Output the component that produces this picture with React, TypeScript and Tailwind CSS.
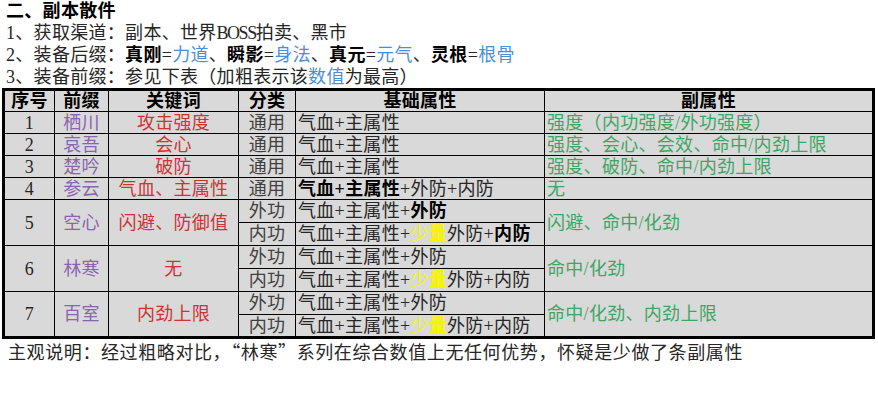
const font = "font-['Liberation_Serif','Noto_Sans_CJK_SC',serif]";

const purple = "text-[#8a64b0]";
const red = "text-[#cc3333]";
const green = "text-[#3fa564]";
const blue = "text-[#4a8fd6]";
const yellow = "text-[#f5f500]";

const cell = "border border-black px-[2px] leading-none whitespace-nowrap";
const quote = "font-['Noto_Sans_CJK_SC',sans-serif] [font-feature-settings:'fwid']";

export default function App() {
  return (
    <div lang="zh-CN" className={`w-[878px] h-[400px] bg-white text-[#262626] ${font} text-[18px] tracking-[0.3px]`}>
      <div className="pl-[6px] leading-[22px]">
        <div className="font-bold text-black">二、副本散件</div>
        <div>
          1、获取渠道：副本、世界<span className="tracking-[-1.5px]">BOSS</span>拍卖、黑市
        </div>
        <div>
          2、装备后缀：<b className="text-black">真刚</b>=<span className={blue}>力道</span>、
          <b className="text-black">瞬影</b>=<span className={blue}>身法</span>、
          <b className="text-black">真元</b>=<span className={blue}>元气</span>、
          <b className="text-black">灵根</b>=<span className={blue}>根骨</span>
        </div>
        <div>
          3、装备前缀：参见下表（加粗表示该<span className={blue}>数值</span>为最高）
        </div>
      </div>

      <table className="ml-[2px] w-[873px] table-fixed border-collapse border-[3px] border-black bg-[#d9d9d9]">
        <colgroup>
          <col className="w-[51px]" />
          <col className="w-[54px]" />
          <col className="w-[130px]" />
          <col className="w-[57px]" />
          <col className="w-[249px]" />
          <col />
        </colgroup>
        <thead>
          <tr className="h-[22px] font-bold text-black text-center">
            <th className={cell}>序号</th>
            <th className={cell}>前缀</th>
            <th className={cell}>关键词</th>
            <th className={cell}>分类</th>
            <th className={cell}>基础属性</th>
            <th className={cell}>副属性</th>
          </tr>
        </thead>
        <tbody>
          <SimpleRow n="1" prefix="栖川" key1="攻击强度" base={<>气血+主属性</>} sub="强度（内功强度/外功强度）" />
          <SimpleRow n="2" prefix="哀吾" key1="会心" base={<>气血+主属性</>} sub="强度、会心、会效、命中/内劲上限" />
          <SimpleRow n="3" prefix="楚吟" key1="破防" base={<>气血+主属性</>} sub="强度、破防、命中/内劲上限" />
          <SimpleRow
            n="4"
            prefix="参云"
            key1="气血、主属性"
            base={<><b className="text-black">气血+主属性</b>+外防+内防</>}
            sub="无"
          />
          <SplitRow
            n="5"
            prefix="空心"
            key1="闪避、防御值"
            outer={<>气血+主属性+<b className="text-black">外防</b></>}
            inner={<>气血+主属性+<span className={yellow}>少量</span>外防+<b className="text-black">内防</b></>}
            sub="闪避、命中/化劲"
          />
          <SplitRow
            n="6"
            prefix="林寒"
            key1="无"
            outer={<>气血+主属性+外防</>}
            inner={<>气血+主属性+<span className={yellow}>少量</span>外防+内防</>}
            sub="命中/化劲"
          />
          <SplitRow
            n="7"
            prefix="百室"
            key1="内劲上限"
            outer={<>气血+主属性+外防</>}
            inner={<>气血+主属性+<span className={yellow}>少量</span>外防+内防</>}
            sub="命中/化劲、内劲上限"
          />
        </tbody>
      </table>

      <div className="pl-[8px] pt-[1px] leading-[22px] tracking-[0.6px]">
        主观说明：经过粗略对比，<span className={quote}>“</span>林寒<span className={quote}>”</span>系列在综合数值上无任何优势，怀疑是少做了条副属性
      </div>
    </div>
  );
}

function SimpleRow({
  n,
  prefix,
  key1,
  base,
  sub,
}: {
  n: string;
  prefix: string;
  key1: string;
  base: React.ReactNode;
  sub: string;
}) {
  return (
    <tr className="h-[22px]">
      <td className={`${cell} text-center`}>{n}</td>
      <td className={`${cell} text-center ${purple}`}>{prefix}</td>
      <td className={`${cell} text-center ${red}`}>{key1}</td>
      <td className={`${cell} text-center text-[#404040]`}>通用</td>
      <td className={cell}>{base}</td>
      <td className={`${cell} ${green}`}>{sub}</td>
    </tr>
  );
}

function SplitRow({
  n,
  prefix,
  key1,
  outer,
  inner,
  sub,
}: {
  n: string;
  prefix: string;
  key1: string;
  outer: React.ReactNode;
  inner: React.ReactNode;
  sub: string;
}) {
  return (
    <>
      <tr className="h-[23px]">
        <td rowSpan={2} className={`${cell} text-center`}>{n}</td>
        <td rowSpan={2} className={`${cell} text-center ${purple}`}>{prefix}</td>
        <td rowSpan={2} className={`${cell} text-center ${red}`}>{key1}</td>
        <td className={`${cell} text-center text-[#404040]`}>外功</td>
        <td className={cell}>{outer}</td>
        <td rowSpan={2} className={`${cell} ${green}`}>{sub}</td>
      </tr>
      <tr className="h-[23px]">
        <td className={`${cell} text-center text-[#404040]`}>内功</td>
        <td className={cell}>{inner}</td>
      </tr>
    </>
  );
}
